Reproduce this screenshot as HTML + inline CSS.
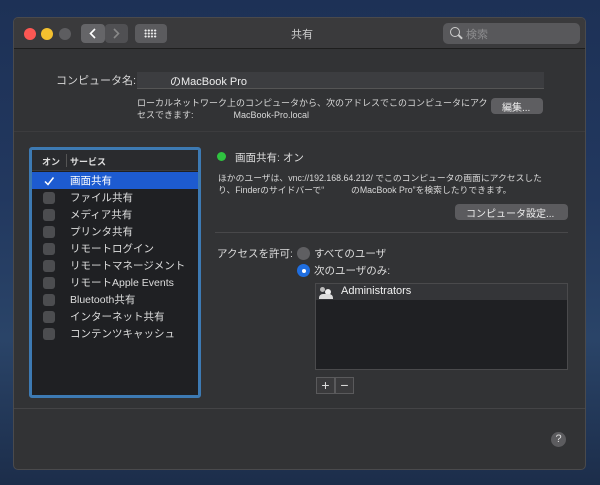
<!DOCTYPE html>
<html><head><meta charset="utf-8"><style>
*{margin:0;padding:0;box-sizing:border-box}
body{width:600px;height:485px;overflow:hidden;background:linear-gradient(180deg,#1d3156 0%,#22385f 40%,#2a4468 70%,#1c2d4a 100%);font-family:"Liberation Sans","Noto Sans CJK JP",sans-serif;color:#dedede;position:relative}
.a{position:absolute}
.win{left:13px;top:17px;width:573px;height:453px;background:#323335;border-radius:5px;overflow:hidden;border:1px solid #4a4a4c}
.tb{left:0;top:0;width:100%;height:31px;background:#3a3a3c;border-bottom:1px solid #1e1e1e}
.dot{width:12px;height:12px;border-radius:50%;top:10px}
.btn{background:#5b5b5e;border-radius:4px}
.t{font-size:11px;white-space:nowrap}
.s{font-size:9px;white-space:nowrap;color:#d8d8d8}
.cb{width:12px;height:12px;border-radius:3px;background:#4c4d50;left:11px}
.row{left:0;width:166px;height:17px}
.row .t{left:38px;top:1px;font-size:10.5px}
</style></head><body>
<div class="a win">
 <div class="a tb">
  <div class="a dot" style="left:10px;background:#fc5753"></div>
  <div class="a dot" style="left:27px;background:#f3c02f"></div>
  <div class="a dot" style="left:45px;background:#5d5d60"></div>
  <div class="a btn" style="left:67px;top:6px;width:24px;height:19px;background:#656568"></div>
  <div class="a btn" style="left:91px;top:6px;width:23px;height:19px;background:#505053"></div>
  <svg class="a" style="left:67px;top:6px" width="47" height="19"><path d="M14 5 L9.5 9.5 L14 14" stroke="#fff" stroke-width="1.6" fill="none"/><path d="M33 5 L37.5 9.5 L33 14" stroke="#888" stroke-width="1.6" fill="none"/></svg>
  <div class="a btn" style="left:121px;top:6px;width:32px;height:19px"></div>
  <div class="a" style="left:130px;top:11px;width:13px;height:9px;background:radial-gradient(circle,#eee 0.9px,transparent 1.2px) 0 0/3.2px 3px"></div>
  <div class="a t" style="left:277px;top:8px;color:#cfcfcf">共有</div>
  <div class="a" style="left:429px;top:5px;width:137px;height:21px;background:#58585b;border-radius:5px"></div>
  <div class="a" style="left:436px;top:9px;width:10px;height:10px;border:1.5px solid #ccc;border-radius:50%"></div>
  <div class="a" style="left:444px;top:18px;width:5px;height:1.5px;background:#ccc;transform:rotate(45deg)"></div>
  <div class="a t" style="left:452px;top:8px;color:#8d8d8f">検索</div>
 </div>
 <div class="a t" style="left:42px;top:54px;color:#d6d6d6">コンピュータ名:</div>
 <div class="a" style="left:123px;top:54px;width:407px;height:17px;background:#3c3d40;border-bottom:1px solid #555"></div>
 <div class="a t" style="left:156px;top:55px;color:#eee">のMacBook Pro</div>
 <div class="a s" style="left:123px;top:78px">ローカルネットワーク上のコンピュータから、次のアドレスでこのコンピュータにアク</div>
 <div class="a s" style="left:123px;top:90px">セスできます:&nbsp;&nbsp;&nbsp;&nbsp;&nbsp;&nbsp;&nbsp;&nbsp;&nbsp;&nbsp;&nbsp;&nbsp;&nbsp;&nbsp;&nbsp;&nbsp;MacBook-Pro.local</div>
 <div class="a btn" style="left:477px;top:80px;width:52px;height:16px;background:#5e5e61"></div>
 <div class="a s" style="left:488px;top:81px;font-size:10px;color:#eee">編集...</div>
 <div class="a" style="left:0;top:113px;width:100%;height:1px;background:#3c3c3e"></div>
 <div class="a" style="left:15px;top:129px;width:172px;height:251px;border:3px solid #3d7ab3;border-radius:3px;background:#1f2023">
  <div class="a" style="left:0;top:0;width:100%;height:21px;background:#2a2b2e;border-bottom:1px solid #3a3a3c"></div>
  <div class="a t" style="left:10px;top:5px;font-size:9px;font-weight:bold">オン</div>
  <div class="a" style="left:34px;top:4px;width:1px;height:13px;background:#555"></div>
  <div class="a t" style="left:38px;top:5px;font-size:9px;font-weight:bold">サービス</div>
  <div class="a row" style="top:22px;background:#1d5bd0"><svg class="a" style="left:11px;top:3px" width="12" height="12"><path d="M2 6.5 L5 9.5 L10.5 2.5" stroke="#fff" stroke-width="1.5" fill="none"/></svg><div class="a t" style="color:#fff">画面共有</div></div>
  <div class="a row" style="top:39px"><div class="a cb" style="top:3px"></div><div class="a t">ファイル共有</div></div>
  <div class="a row" style="top:56px"><div class="a cb" style="top:3px"></div><div class="a t">メディア共有</div></div>
  <div class="a row" style="top:73px"><div class="a cb" style="top:3px"></div><div class="a t">プリンタ共有</div></div>
  <div class="a row" style="top:90px"><div class="a cb" style="top:3px"></div><div class="a t">リモートログイン</div></div>
  <div class="a row" style="top:107px"><div class="a cb" style="top:3px"></div><div class="a t">リモートマネージメント</div></div>
  <div class="a row" style="top:124px"><div class="a cb" style="top:3px"></div><div class="a t">リモートApple Events</div></div>
  <div class="a row" style="top:141px"><div class="a cb" style="top:3px"></div><div class="a t">Bluetooth共有</div></div>
  <div class="a row" style="top:158px"><div class="a cb" style="top:3px"></div><div class="a t">インターネット共有</div></div>
  <div class="a row" style="top:175px"><div class="a cb" style="top:3px"></div><div class="a t">コンテンツキャッシュ</div></div>
 </div>
 <div class="a" style="left:203px;top:134px;width:9px;height:9px;border-radius:50%;background:#2fc340"></div>
 <div class="a t" style="left:221px;top:132px;font-size:10.5px">画面共有: オン</div>
 <div class="a s" style="left:204px;top:153px;font-size:8.8px">ほかのユーザは、vnc://192.168.64.212/ でこのコンピュータの画面にアクセスした</div>
 <div class="a s" style="left:204px;top:165px;font-size:8.8px">り、Finderのサイドバーで“&nbsp;&nbsp;&nbsp;&nbsp;&nbsp;&nbsp;&nbsp;&nbsp;&nbsp;&nbsp;&nbsp;のMacBook Pro”を検索したりできます。</div>
 <div class="a btn" style="left:441px;top:186px;width:113px;height:16px"></div>
 <div class="a s" style="left:452px;top:187px;font-size:10px;color:#eee">コンピュータ設定...</div>
 <div class="a" style="left:201px;top:214px;width:353px;height:1px;background:#48484a"></div>
 <div class="a t" style="left:203px;top:228px;font-size:10.5px">アクセスを許可:</div>
 <div class="a" style="left:283px;top:229px;width:13px;height:13px;border-radius:50%;background:#5f5f62"></div>
 <div class="a t" style="left:300px;top:228px;font-size:10.5px">すべてのユーザ</div>
 <div class="a" style="left:283px;top:246px;width:13px;height:13px;border-radius:50%;background:#1f6ee0"></div>
 <div class="a" style="left:287.5px;top:250.5px;width:4px;height:4px;border-radius:50%;background:#fff"></div>
 <div class="a t" style="left:300px;top:245px;font-size:10.5px">次のユーザのみ:</div>
 <div class="a" style="left:301px;top:265px;width:253px;height:87px;background:#1f2023;border:1px solid #4a4a4c"></div>
 <div class="a" style="left:302px;top:266px;width:251px;height:16px;background:#343538"></div>
 <div class="a" style="left:306px;top:269px;width:5px;height:5px;border-radius:50%;background:#bbb"></div>
 <div class="a" style="left:311px;top:271px;width:6px;height:6px;border-radius:50%;background:#eee"></div>
 <div class="a" style="left:305px;top:276px;width:14px;height:5px;border-radius:4px 4px 0 0;background:#ddd"></div>
 <div class="a t" style="left:327px;top:267px;color:#f0f0f0">Administrators</div>
 <div class="a" style="left:302px;top:359px;width:19px;height:17px;border:1px solid #5a5a5c;background:#3a3a3c;color:#ddd;font-size:14px;line-height:14px;text-align:center">+</div>
 <div class="a" style="left:321px;top:359px;width:19px;height:17px;border:1px solid #5a5a5c;background:#3a3a3c;color:#ddd;font-size:14px;line-height:14px;text-align:center">−</div>
 <div class="a" style="left:0;top:390px;width:100%;height:1px;background:#444446"></div>
 <div class="a" style="left:537px;top:414px;width:15px;height:15px;border-radius:50%;background:#5c5c5f;color:#ddd;font-size:11px;text-align:center;line-height:15px">?</div>
</div>
</body></html>
